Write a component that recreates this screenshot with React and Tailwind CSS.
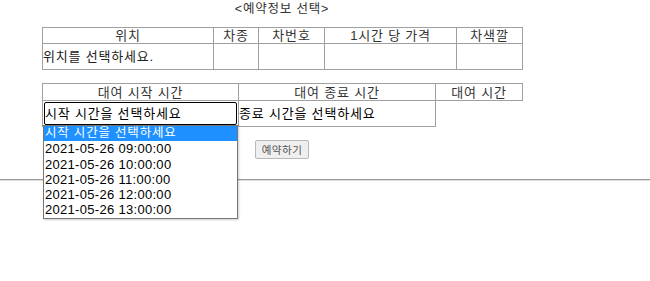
import React from "react";

const times = [
  "2021-05-26 09:00:00",
  "2021-05-26 10:00:00",
  "2021-05-26 11:00:00",
  "2021-05-26 12:00:00",
  "2021-05-26 13:00:00",
];

const cell = "border border-[#a0a0a0] p-0";

const App = () => {
  return (
    <div className="relative h-[281px] w-[650px] bg-white text-[13px] leading-[15px] tracking-[0.8px] text-black [font-family:'Liberation_Sans','Noto_Sans_CJK_KR',sans-serif]">
      <div className="ml-[42px] w-[480px]">
        {/* 제목 */}
        <div className="flex h-[27px] items-start justify-center pt-[1px] text-[12.5px] leading-[17px] text-[#333]">
          &lt;예약정보 선택&gt;
        </div>

        {/* 차량 정보 */}
        <table className="w-[480px] table-fixed border-collapse">
          <colgroup>
            <col className="w-[171px]" />
            <col className="w-[45px]" />
            <col className="w-[66px]" />
            <col className="w-[132px]" />
            <col className="w-[66px]" />
          </colgroup>
          <tbody>
            <tr className="h-[16px] text-center text-[#333]">
              <td className={cell}>위치</td>
              <td className={cell}>차종</td>
              <td className={cell}>차번호</td>
              <td className={cell}>1시간 당 가격</td>
              <td className={cell}>차색깔</td>
            </tr>
            <tr className="h-[26px]">
              <td className={cell + " text-left text-[#222]"}>위치를 선택하세요.</td>
              <td className={cell}></td>
              <td className={cell}></td>
              <td className={cell}></td>
              <td className={cell}></td>
            </tr>
          </tbody>
        </table>

        {/* 대여 시간 */}
        <table className="mt-[13px] w-[480px] table-fixed border-collapse">
          <colgroup>
            <col className="w-[196px]" />
            <col className="w-[197px]" />
            <col className="w-[87px]" />
          </colgroup>
          <tbody>
            <tr className="h-[17px] text-center text-[#333]">
              <td className={cell}>대여 시작 시간</td>
              <td className={cell}>대여 종료 시간</td>
              <td className={cell}>대여 시간</td>
            </tr>
            <tr className="h-[26px]">
              <td className={cell}>
                <div className="mx-[1px] flex h-[23px] items-center rounded-[2px] border border-black">
                  시작 시간을 선택하세요
                </div>
              </td>
              <td className={cell}>종료 시간을 선택하세요</td>
              <td className="p-0"></td>
            </tr>
          </tbody>
        </table>

        <div className="mt-[13px] flex justify-center">
          <button className="h-[19px] w-[54px] rounded-[2px] border border-[#b8b8b8] bg-[#efefef] text-[10.5px] leading-[12px] tracking-[0.5px] text-[#555]">
            예약하기
          </button>
        </div>
      </div>

      <div className="mt-[20px] h-[2px] w-full border-t border-[#999] bg-[#ddd]" />

      {/* 열린 선택 목록 */}
      <div className="absolute left-[43px] top-[125px] w-[195px] border border-[#767676] bg-white shadow-[1px_1px_2px_rgba(0,0,0,0.2)]">
        <div className="h-[15.3px] bg-[#1e90ff] pl-[1px] text-[12.5px] leading-[15px] text-white">
          시작 시간을 선택하세요
        </div>
        {times.map((t) => (
          <div key={t} className="h-[15.3px] pl-[1px] leading-[15px] tracking-[0.3px]">
            {t}
          </div>
        ))}
      </div>
    </div>
  );
};

export default App;
